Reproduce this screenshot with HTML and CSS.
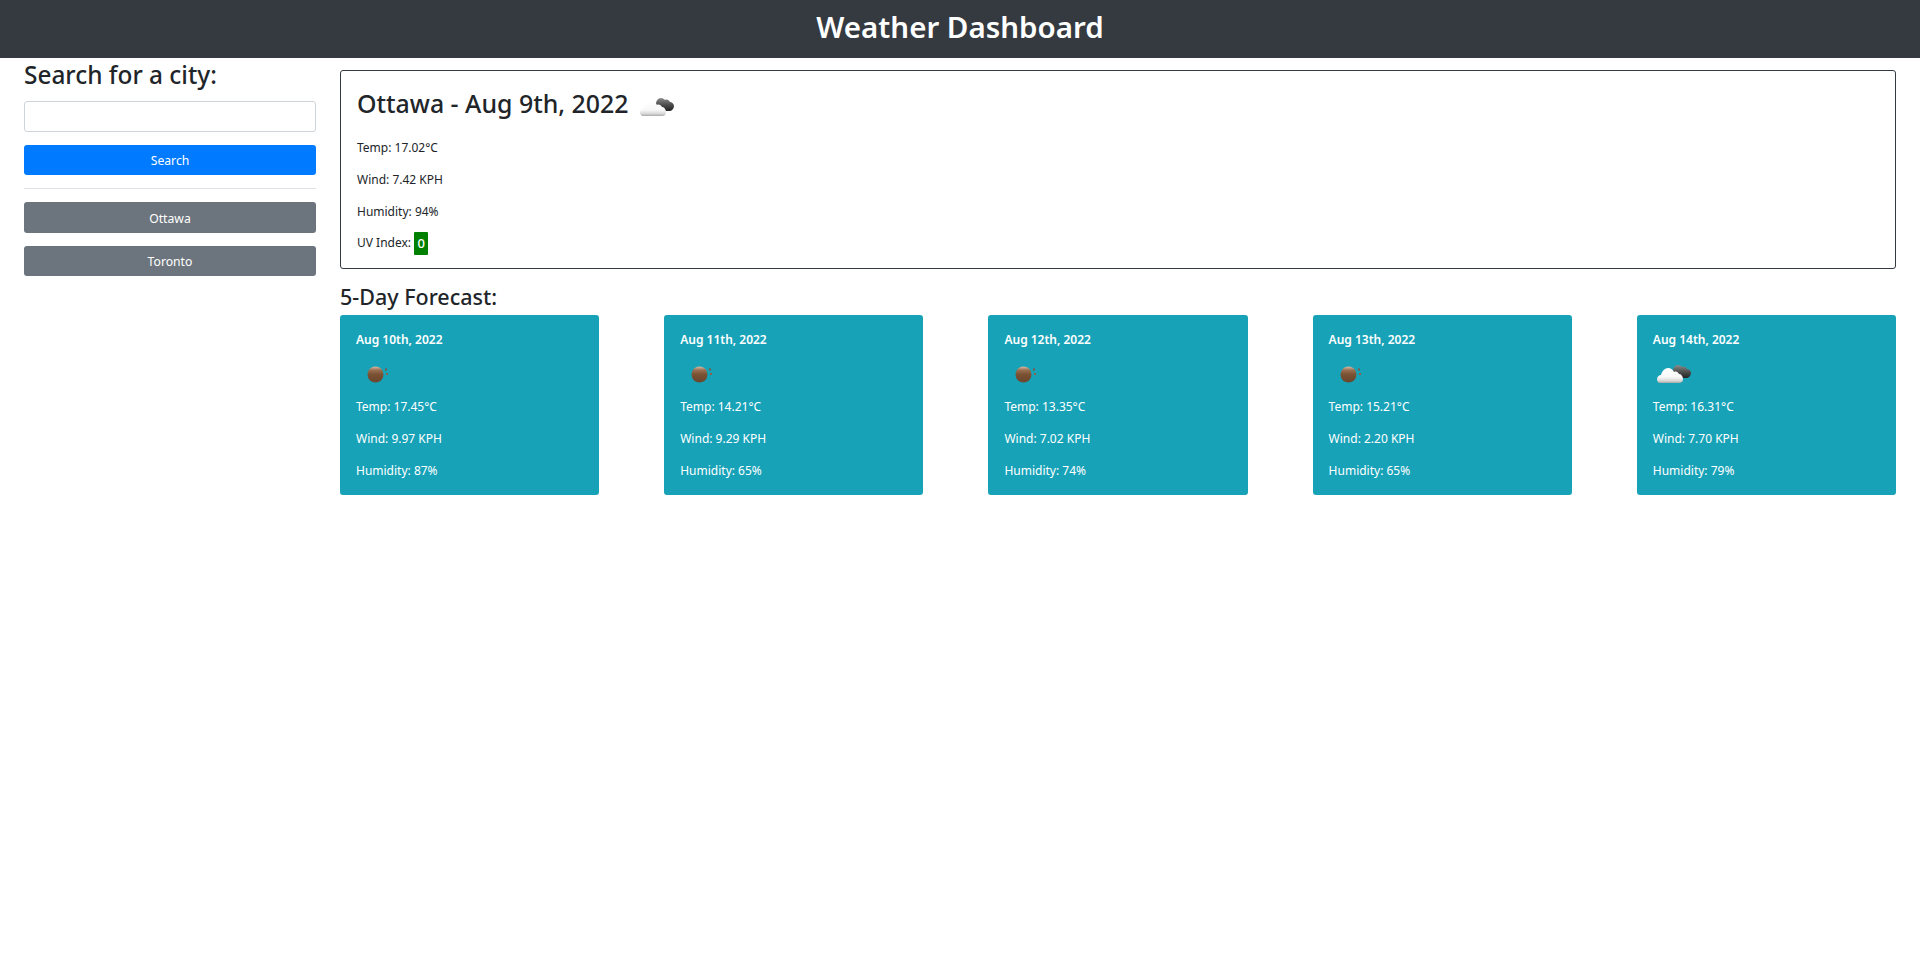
FILE: index.html
```html
<!DOCTYPE html>
<html lang="en">
<head>
<meta charset="utf-8">
<title>Weather Dashboard</title>
<link rel="stylesheet" href="styles.css">
</head>
<body>
<svg class="defs" width="0" height="0" aria-hidden="true">
  <defs>
    <linearGradient id="white" x1="0" y1="0" x2="0" y2="1"><stop offset="0" stop-color="#fff"/><stop offset=".6" stop-color="#f8f8f8"/><stop offset=".85" stop-color="#d8d8d8"/><stop offset="1" stop-color="#a8a8a8"/></linearGradient>
    <linearGradient id="dark" x1="0" y1="0" x2="0" y2="1"><stop offset="0" stop-color="#8c8c8c"/><stop offset=".5" stop-color="#505050"/><stop offset="1" stop-color="#222"/></linearGradient>
    <linearGradient id="brown" x1="0" y1="0" x2="0" y2="1"><stop offset="0" stop-color="#d8bda8"/><stop offset=".22" stop-color="#9a6f52"/><stop offset=".5" stop-color="#7a5233"/><stop offset="1" stop-color="#6a452e"/></linearGradient>
    <symbol id="clouds" viewBox="0 0 50 50">
      <path fill="url(#dark)" d="M20 21c0-3 2-6 5-6 2 0 3 1 4 2 2-1 4 0 5 2 2 0 4 2 4 4s-2 5-4 5H25c-3 0-5-4-5-7z"/>
      <path fill="url(#white)" d="M7 33c-2 0-3-2-3-4s2-4 4-4c1-4 4-7 7-7 3 0 5 2 6 4 2-1 4 0 5 2 2 0 4 2 4 5s-2 4-4 4z"/>
    </symbol>
    <symbol id="rain" viewBox="0 0 50 50">
      <circle cx="19.5" cy="24.5" r="8" fill="url(#brown)"/>
      <rect x="29" y="18.500" width="2" height="2" fill="#7f5643"/>
      <rect x="30" y="23" width="2" height="2" fill="#8f6048"/>
    </symbol>
  </defs>
</svg>
<header class="topbar"><h1 class="brand">Weather Dashboard</h1></header>
<div class="layout">
  <aside class="sidebar">
    <h2 class="side-title">Search for a city:</h2>
    <form class="search">
      <input class="field" type="text" aria-label="City">
      <button class="btn btn-primary" type="button">Search</button>
    </form>
    <hr class="rule">
    <div class="history">
      <button class="btn btn-muted" type="button">Ottawa</button>
      <button class="btn btn-muted" type="button">Toronto</button>
    </div>
  </aside>
  <main class="content">
    <section class="today">
      <h2 class="today-title">Ottawa - Aug 9th, 2022 <svg class="today-icon"><use href="#clouds"/></svg></h2>
      <p class="stat">Temp: 17.02°C</p>
      <p class="stat">Wind: 7.42 KPH</p>
      <p class="stat">Humidity: 94%</p>
      <p class="stat stat-uv">UV Index: <span class="uv">0</span></p>
    </section>
    <h3 class="forecast-title">5-Day Forecast:</h3>
    <div class="forecast">
      <article class="day">
        <p class="day-date">Aug 10th, 2022</p>
        <svg class="day-icon"><use href="#rain"/></svg>
        <p class="stat">Temp: 17.45°C</p><p class="stat">Wind: 9.97 KPH</p><p class="stat">Humidity: 87%</p>
      </article>
      <article class="day">
        <p class="day-date">Aug 11th, 2022</p>
        <svg class="day-icon"><use href="#rain"/></svg>
        <p class="stat">Temp: 14.21°C</p><p class="stat">Wind: 9.29 KPH</p><p class="stat">Humidity: 65%</p>
      </article>
      <article class="day">
        <p class="day-date">Aug 12th, 2022</p>
        <svg class="day-icon"><use href="#rain"/></svg>
        <p class="stat">Temp: 13.35°C</p><p class="stat">Wind: 7.02 KPH</p><p class="stat">Humidity: 74%</p>
      </article>
      <article class="day">
        <p class="day-date">Aug 13th, 2022</p>
        <svg class="day-icon"><use href="#rain"/></svg>
        <p class="stat">Temp: 15.21°C</p><p class="stat">Wind: 2.20 KPH</p><p class="stat">Humidity: 65%</p>
      </article>
      <article class="day">
        <p class="day-date">Aug 14th, 2022</p>
        <svg class="day-icon"><use href="#clouds"/></svg>
        <p class="stat">Temp: 16.31°C</p><p class="stat">Wind: 7.70 KPH</p><p class="stat">Humidity: 79%</p>
      </article>
    </div>
  </main>
</div>
</body>
</html>
```
FILE: styles.css
```css
* { box-sizing: border-box; }
html, body { margin: 0; padding: 0; }
body { background: #fff; color: #212529; font-family: "Noto Sans", "Open Sans", sans-serif; font-size: 13px; }
.defs { position: absolute; }
.topbar { height: 58px; background: #343a40; display: flex; align-items: center; justify-content: center; padding-bottom: 4px; }
.brand { margin: 0; color: #fff; font-size: 29.5px; font-weight: 600; line-height: 36px; }
.layout { display: flex; gap: 24px; padding: 0 24px; }
.sidebar { width: 292px; flex: none; }
.side-title { margin: 0; height: 43px; font-size: 24.4px; font-weight: 500; line-height: 33px; }
.search { display: flex; flex-direction: column; gap: 13px; }
.field { display: block; width: 100%; height: 31px; border: 1px solid #ced4da; border-radius: 3px; background: #fff; }
.btn { display: block; width: 100%; border: 0; border-radius: 3px; color: #fff; font-family: inherit; font-size: 12.2px; height: 30px; padding: 0; }
.btn-primary { background: #007bff; }
.btn-muted { background: #6c757d; height: 30.5px; padding-top: 2px; }
.rule { margin: 13px 0 13px; border: 0; border-top: 1px solid #dee2e6; }
.history { display: flex; flex-direction: column; gap: 13px; }
.content { flex: 1; min-width: 0; padding-top: 12px; }
.today { height: 199px; border: 1px solid #343a40; border-radius: 3px; padding: 14px 16px; }
.today-title { margin: 0 0 17px; height: 36px; font-size: 24.9px; font-weight: 500; line-height: 36px; display: flex; align-items: flex-start; gap: 8px; }
.today-icon { width: 50px; height: 50px; flex: none; margin-top: -2px; }
.stat { margin: 0 0 12px; height: 20px; font-size: 12px; line-height: 20px; }
.stat-uv { margin-top: -2px; }
.uv { display: inline-block; height: 23px; width: 14px; text-align: center; background: #008000; color: #fff; font-size: 13px; font-weight: 500; line-height: 23px; border-radius: 1px; vertical-align: middle; }
.forecast-title { margin: 13px 0 0; height: 33px; font-size: 21.5px; font-weight: 500; line-height: 30px; }
.forecast { display: flex; justify-content: space-between; }
.day { width: 259.2px; height: 180px; background: #17a2b8; color: #fff; border-radius: 3px; padding: 15px 16px; }
.day-date { margin: 0; height: 20px; font-size: 12px; font-weight: 600; line-height: 20px; }
.day-icon { display: block; width: 50px; height: 50px; margin-bottom: -3px; }
```
